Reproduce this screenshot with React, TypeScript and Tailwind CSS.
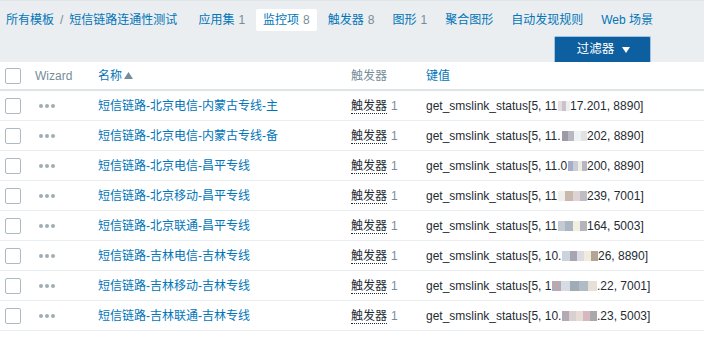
import React from "react";

const font = { fontFamily: '"Liberation Sans", Arial, "Noto Sans CJK SC", sans-serif' };

type Row = { name: string; pre: string; w: number; post: string; tiles: string[] };

const rows: Row[] = [
  { name: "短信链路-北京电信-内蒙古专线-主", pre: "11", w: 144, post: "17.201, 8890]", tiles: ["#e6dde2", "#c9c3cb", "#eeeeee"] },
  { name: "短信链路-北京电信-内蒙古专线-备", pre: "11.", w: 161, post: "202, 8890]", tiles: ["#9d9aa6", "#b9b7c0", "#eef2f3", "#e2e2e6"] },
  { name: "短信链路-北京电信-昌平专线", pre: "11.0", w: 161, post: "200, 8890]", tiles: ["#a7adc9", "#c8cdd8", "#f2ede3", "#b8b6c2"] },
  { name: "短信链路-北京移动-昌平专线", pre: "11", w: 161, post: "239, 7001]", tiles: ["#eeeeee", "#c9b9ad", "#ddd3d3", "#bfbcc5"] },
  { name: "短信链路-北京联通-昌平专线", pre: "11", w: 161, post: "164, 5003]", tiles: ["#c5c9d2", "#aab7c2", "#f3efe0", "#b3b5be"] },
  { name: "短信链路-吉林电信-吉林专线", pre: "10.", w: 172, post: "26, 8890]", tiles: ["#cbd3de", "#a9a4b2", "#dcdbe2", "#f1ebdc", "#b2a596"] },
  { name: "短信链路-吉林移动-吉林专线", pre: "1", w: 171, post: ".22, 7001]", tiles: ["#b8aab5", "#d7dbe3", "#9fabb7", "#b0bcc5", "#e6e0d6"] },
  { name: "短信链路-吉林联通-吉林专线", pre: "10.", w: 171, post: ".23, 5003]", tiles: ["#b5a9b4", "#d9d1cf", "#e7dbd6", "#d8b8c0", "#a9a9ab"] },
];

const tabs = [
  { label: "应用集", count: "1" },
  { label: "监控项", count: "8", active: true },
  { label: "触发器", count: "8" },
  { label: "图形", count: "1" },
  { label: "聚合图形" },
  { label: "自动发现规则" },
  { label: "Web 场景" },
];

const Checkbox = () => (
  <span className="block w-[16px] h-[16px] border border-[#acbbc2] rounded-[2px] bg-white" />
);

const Dots = () => (
  <span className="flex gap-[2px] ml-[4px]">
    <span className="w-[4px] h-[4px] rounded-full bg-[#a2adb3]" />
    <span className="w-[4px] h-[4px] rounded-full bg-[#a2adb3]" />
    <span className="w-[4px] h-[4px] rounded-full bg-[#a2adb3]" />
  </span>
);

const gridCols = "grid grid-cols-[30px_63px_253px_75px_1fr] items-center pl-[5px]";

export default function App() {
  return (
    <div className="w-[704px] h-[342px] bg-white text-[12px] text-[#1f2c33] overflow-hidden" style={font}>
      <div className="h-[62px] bg-[#ebeef0] border-t border-[#dfe4e7] pt-[8px]">
        <div className="flex items-center h-[22px] pl-[6px]">
          <a className="text-[#0275b8]">所有模板</a>
          <span className="text-[#768d99] mx-[6px]">/</span>
          <a className="text-[#0275b8]">短信链路连通性测试</a>
          <div className="flex items-center ml-[14px] gap-[4px]">
            {tabs.map((t) => (
              <span
                key={t.label}
                className={
                  "h-[22px] flex items-center px-[7px] " +
                  (t.active ? "bg-white rounded-[2px]" : "")
                }
              >
                <span className="text-[#0275b8]">{t.label}</span>
                {t.count && <span className="text-[#768d99] ml-[4px]">{t.count}</span>}
              </span>
            ))}
          </div>
        </div>
        <div className="flex justify-end pr-[53px] mt-[5px]">
          <div className="w-[97px] h-[26px] border border-b-0 border-[#9fc3e2] rounded-t-[2px] bg-[#0e5f9f] text-white flex items-center justify-center gap-[8px] pl-[2px]">
            <span className="text-[12.5px]">过滤器</span>
            <svg width="8" height="6" viewBox="0 0 8 6">
              <path d="M0 0h8L4 6z" fill="#fff" />
            </svg>
          </div>
        </div>
      </div>

      <div className={gridCols + " h-[29px] border-b-2 border-[#dfe4e7]"}>
        <Checkbox />
        <span className="text-[#768d99]">Wizard</span>
        <span className="flex items-center text-[#0275b8]">
          名称
          <svg width="9" height="7" viewBox="0 0 9 7" className="ml-[2px]">
            <path d="M0 7L4.5 0L9 7z" fill="#768d99" />
          </svg>
        </span>
        <span className="text-[#768d99]">触发器</span>
        <span className="text-[#0275b8]">键值</span>
      </div>

      {rows.map((r) => (
        <div key={r.name} className={gridCols + " h-[30px] border-b border-[#ebeef0] pt-[1px]"}>
          <Checkbox />
          <Dots />
          <a className="text-[#0275b8]">{r.name}</a>
          <span>
            <span className="border-b border-dotted border-[#1f2c33]">触发器</span>
            <span className="text-[#768d99] ml-[4px]">1</span>
          </span>
          <span className="flex items-center whitespace-nowrap">
            <span className="flex items-center overflow-hidden" style={{ width: r.w }}>
              <span>get_smslink_status[5, {r.pre}</span>
              <span className="flex flex-1 h-[10px] ml-[1px]">
                {r.tiles.map((c, i) => (
                  <span key={i} className="flex-1 h-full" style={{ background: c }} />
                ))}
              </span>
            </span>
            <span>{r.post}</span>
          </span>
        </div>
      ))}
    </div>
  );
}
